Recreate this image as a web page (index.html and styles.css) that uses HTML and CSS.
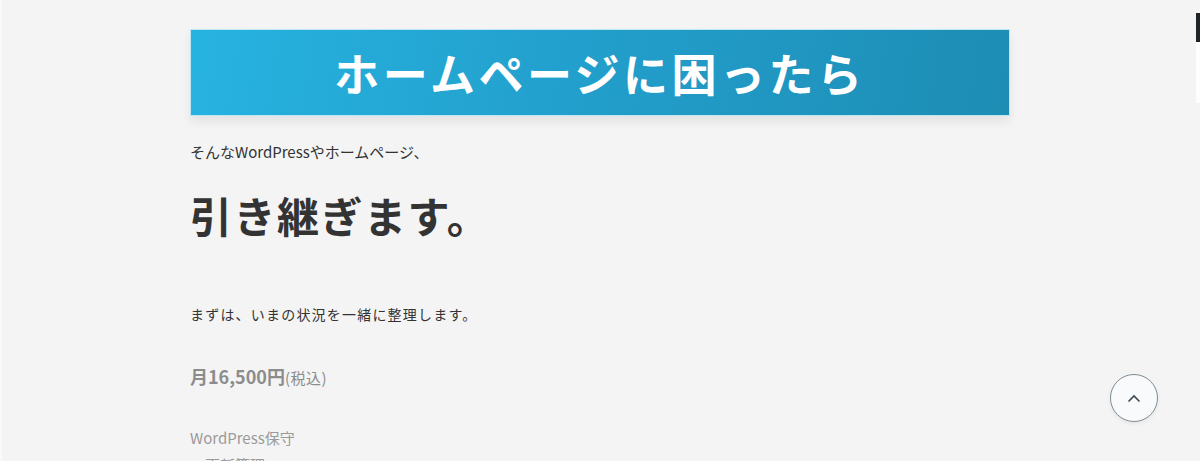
FILE: index.html
```html
<!DOCTYPE html>
<html lang="ja">
<head>
<meta charset="utf-8">
<title>ホームページに困ったら</title>
<link rel="stylesheet" href="styles.css">
</head>
<body>
<div class="edge-left"></div>
<main class="content">
  <h2 class="banner">ホームページに困ったら</h2>
  <p class="lead">そんなWordPressやホームページ、</p>
  <h1 class="catch">引き継ぎます。</h1>
  <p class="intro">まずは、いまの状況を一緒に整理します。</p>
  <p class="price">月16,500円<span class="tax">(税込)</span></p>
  <ul class="plan">
    <li class="plan-title">WordPress保守</li>
    <li>・更新管理</li>
  </ul>
</main>
<div class="side-tab">
  <span class="side-tab-dark"></span>
  <span class="side-tab-light"></span>
</div>
<a class="to-top" href="#" aria-label="ページトップへ">
  <svg width="14" height="9" viewBox="0 0 14 9"><path d="M1.5 7.5 L7 2 L12.5 7.5" fill="none" stroke="#3b4a52" stroke-width="1.6"/></svg>
</a>
</body>
</html>
```
FILE: styles.css
```css
html, body {
  margin: 0;
  padding: 0;
  height: 100%;
  overflow: hidden;
}
body {
  background: #f4f4f4;
  font-family: "Noto Sans CJK JP", "Noto Sans", sans-serif;
  color: #333;
}
.edge-left {
  position: fixed;
  left: 0;
  top: 0;
  bottom: 0;
  width: 2px;
  background: #f9f9f9;
}
.content {
  width: 820px;
  margin: 0 auto;
  padding-top: 29px;
}
.banner {
  margin: 0;
  height: 87px;
  display: flex;
  align-items: center;
  justify-content: center;
  background: linear-gradient(100deg, #27b3e0 0%, #229ecb 50%, #1d8db4 100%);
  border: 1px solid #bfe6f3;
  box-sizing: border-box;
  box-shadow: 0 6px 10px rgba(0, 0, 0, 0.07);
  color: #fff;
  font-size: 45px;
  font-weight: 700;
  letter-spacing: 3.5px;
  line-height: 1;
}
.lead {
  margin: 22px 0 0;
  font-size: 15px;
  line-height: 27px;
  color: #333;
}
.catch {
  margin: 21px 0 0;
  font-size: 42px;
  font-weight: 700;
  letter-spacing: 1.5px;
  line-height: 57px;
  color: #333;
}
.intro {
  margin: 58px 0 0;
  font-size: 14px;
  letter-spacing: 1.2px;
  line-height: 27px;
  color: #333;
}
.price {
  margin: 35px 0 0;
  font-size: 18px;
  font-weight: 700;
  line-height: 27px;
  color: #8c8c8c;
}
.tax {
  font-size: 15px;
  font-weight: 400;
  letter-spacing: 0.5px;
}
.plan {
  list-style: none;
  margin: 33px 0 0;
  padding: 0;
  font-size: 15px;
  line-height: 27px;
  color: #9a9a9a;
}
.side-tab {
  position: fixed;
  right: 0;
  top: 13px;
  width: 4px;
  display: flex;
  flex-direction: column;
}
.side-tab-dark {
  height: 29px;
  background: #1f2326;
}
.side-tab-light {
  height: 61px;
  background: #fefefe;
}
.to-top {
  position: fixed;
  left: 1110px;
  top: 374px;
  width: 48px;
  height: 48px;
  box-sizing: border-box;
  border: 1px solid #7d8d93;
  border-radius: 50%;
  background: #f9fafb;
  display: flex;
  align-items: center;
  justify-content: center;
  box-shadow: 0 2px 4px rgba(0, 0, 0, 0.06);
}
```
